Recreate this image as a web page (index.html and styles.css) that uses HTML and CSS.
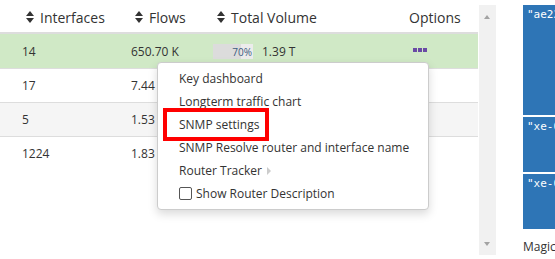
FILE: index.html
```html
<!DOCTYPE html>
<html lang="en">
<head>
    <meta charset="UTF-8">
    <title>Routers</title>
    <link rel="stylesheet" href="styles.css">
</head>
<body>
<div class="page">
    <div class="main">
        <div class="row head">
            <div class="cell c1"><span class="sort"></span>Interfaces</div>
            <div class="cell c2"><span class="sort"></span>Flows</div>
            <div class="cell c3"><span class="sort"></span>Total Volume</div>
            <div class="cell c4">Options</div>
        </div>
        <div class="row active">
            <div class="cell c1">14</div>
            <div class="cell c2">650.70 K</div>
            <div class="cell c3">
                <div class="bar"><div class="bar-fill" style="width: 70%"></div><span class="bar-label">70%</span></div>
                <span>1.39 T</span>
            </div>
            <div class="cell c4"><span class="dots"><i></i><i></i><i></i></span></div>
        </div>
        <div class="row">
            <div class="cell c1">17</div>
            <div class="cell c2">7.44</div>
            <div class="cell c3"></div>
            <div class="cell c4"></div>
        </div>
        <div class="row striped">
            <div class="cell c1">5</div>
            <div class="cell c2">1.53</div>
            <div class="cell c3"></div>
            <div class="cell c4"></div>
        </div>
        <div class="row">
            <div class="cell c1">1224</div>
            <div class="cell c2">1.83</div>
            <div class="cell c3"></div>
            <div class="cell c4"></div>
        </div>

        <ul class="menu">
            <li>Key dashboard</li>
            <li>Longterm traffic chart</li>
            <li>SNMP settings</li>
            <li>SNMP Resolve router and interface name</li>
            <li>Router Tracker <span class="caret"></span></li>
            <li><span class="check"></span>Show Router Description</li>
            <div class="highlight"></div>
        </ul>
    </div>

    <div class="scroll">
        <span class="arrow-up"></span>
        <span class="arrow-down"></span>
    </div>

    <div class="side">
        <div class="block b1">"ae22</div>
        <div class="block b2">"xe-0</div>
        <div class="block b3">"xe-0</div>
        <div class="side-label">Magic</div>
    </div>
</div>
</body>
</html>
```

FILE: styles.css
```css
body {
    margin: 0;
    font-family: "Open Sans", Arial, sans-serif;
    font-size: 12px;
    color: #333;
    background-color: #fff;
}
.page {
    display: flex;
    width: 555px;
    height: 259px;
    overflow: hidden;
}
.main {
    position: relative;
    width: 478px;
    flex-shrink: 0;
}
.row {
    display: grid;
    grid-template-columns: 122px 82px 196px 78px;
    height: 33px;
    border-top: 1px solid #ddd;
    align-items: center;
}
.row.head {
    height: 34px;
    border-top: none;
    border-bottom: 2px solid #ddd;
    font-size: 14px;
    padding-top: 2px;
    box-sizing: border-box;
}
.row.head + .row {
    border-top: none;
    height: 34px;
}
.row.active {
    background-color: #d0e9c6;
}
.row.striped {
    background-color: #f5f5f5;
}
.cell {
    padding-left: 9px;
    display: flex;
    align-items: center;
    white-space: nowrap;
}
.cell.c1 {
    padding-left: 22px;
}
.head .cell {
    padding-left: 13px;
}
.head .cell.c1 {
    padding-left: 26px;
}
.head .cell.c4 {
    padding-left: 9px;
}
.sort {
    display: inline-block;
    width: 9px;
    height: 12px;
    margin-right: 5px;
    position: relative;
}
.sort::before,
.sort::after {
    content: "";
    position: absolute;
    left: 0;
    border-left: 4.5px solid transparent;
    border-right: 4.5px solid transparent;
}
.sort::before {
    top: 0;
    border-bottom: 5px solid #333;
}
.sort::after {
    bottom: 0;
    border-top: 5px solid #333;
}
.bar {
    position: relative;
    width: 40px;
    height: 15px;
    background-color: #ececec;
    margin-right: 9px;
}
.bar-fill {
    height: 100%;
    background-color: #dcdcdc;
}
.bar-label {
    position: absolute;
    right: 1px;
    top: 1px;
    font-size: 10px;
    line-height: 15px;
    color: #3c5a80;
}
.c4 .dots {
    display: flex;
    gap: 1px;
    margin-left: 4px;
    margin-top: -3px;
}
.dots i {
    display: block;
    width: 4px;
    height: 4px;
    background-color: #6a4aa5;
}
.menu {
    position: absolute;
    left: 157px;
    top: 62px;
    width: 270px;
    margin: 0;
    padding: 4px 0;
    list-style: none;
    background-color: #fff;
    border: 1px solid #ccc;
    border-radius: 4px;
    box-shadow: 0 4px 10px rgba(0, 0, 0, 0.15);
}
.menu li {
    height: 23px;
    line-height: 23px;
    padding-left: 21px;
    white-space: nowrap;
    display: flex;
    align-items: center;
}
.caret {
    display: inline-block;
    margin-left: 5px;
    border-top: 4px solid transparent;
    border-bottom: 4px solid transparent;
    border-left: 4px solid #ccc;
}
.check {
    display: inline-block;
    width: 11px;
    height: 11px;
    border: 1px solid #555;
    border-radius: 2px;
    margin-right: 4px;
}
.highlight {
    position: absolute;
    left: 5px;
    top: 45px;
    width: 98px;
    height: 25px;
    border: 4px solid #f00;
}
.scroll {
    position: relative;
    width: 17px;
    height: 250px;
    margin-top: 5px;
    margin-left: 1px;
    background-color: #f1f1f1;
    flex-shrink: 0;
}
.arrow-up,
.arrow-down {
    position: absolute;
    left: 5px;
    border-left: 3.5px solid transparent;
    border-right: 3.5px solid transparent;
}
.arrow-up {
    top: 10px;
    border-bottom: 4px solid #a3a3a3;
}
.arrow-down {
    bottom: 9px;
    border-top: 4px solid #a3a3a3;
}
.side {
    margin-left: 27px;
    margin-top: 5px;
    width: 40px;
    flex-shrink: 0;
}
.block {
    background-color: #2e75b6;
    color: #fff;
    font-family: "DejaVu Sans Mono", monospace;
    font-size: 11px;
    padding: 3px 0 0 4px;
    box-sizing: border-box;
    margin-bottom: 2px;
}
.b1 {
    height: 110px;
}
.b2,
.b3 {
    height: 55px;
}
.side-label {
    margin-top: 9px;
}
```
